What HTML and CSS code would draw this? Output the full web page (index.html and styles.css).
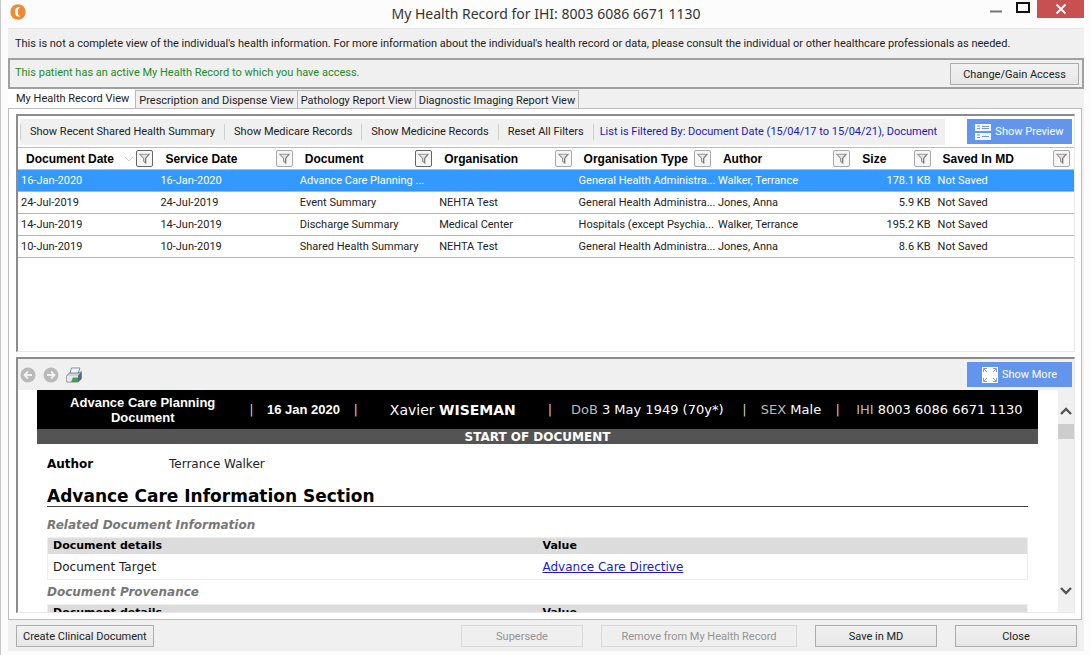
FILE: index.html
```
<!DOCTYPE html>
<html lang="en">
<head>
<meta charset="utf-8">
<title>My Health Record</title>
<link rel="stylesheet" href="styles.css">
</head>
<body>
<svg class="defs" aria-hidden="true">
  <symbol id="funnel" viewBox="0 0 16 16"><path d="M3 3.500h10L9.500 8v5L7 11V8z" fill="#e4e4e4" stroke="#999" stroke-width="1.200"/><path d="M12.500 3.500L9 8v5" fill="none" stroke="#777"/></symbol>
</svg>
<div class="window">
  <header class="titlebar">
    <svg class="logo" viewBox="0 0 16 16"><circle cx="8" cy="8" r="7.700" fill="#ee8a35"/><path d="M10.500 3.600C6 2.500 5 5.500 5 8s1.300 5.300 5.500 4.400C8.300 11.500 7.800 10 7.800 8s.5-3.500 2.700-4.400z" fill="#fff"/></svg>
    <h1>My Health Record for IHI: 8003 6086 6671 1130</h1>
    <div class="controls">
      <button class="ctl" aria-label="Minimise"><svg width="14" height="14" viewBox="0 0 14 14"><path d="M1 11.500h12" stroke="#777" stroke-width="2"/></svg></button>
      <button class="ctl" aria-label="Maximise"><svg width="14" height="14" viewBox="0 0 14 14"><path d="M1 3h12v9H1z" fill="none" stroke="#111" stroke-width="2"/></svg></button>
      <button class="ctl close" aria-label="Close window"><svg width="12" height="12" viewBox="0 0 12 12"><path d="M1.500 1.500l9 9M10.500 1.500l-9 9" stroke="#fff" stroke-width="1.800"/></svg></button>
    </div>
  </header>
  <main class="content">
    <p class="notice">This is not a complete view of the individual's health information. For more information about the individual's health record or data, please consult the individual or other healthcare professionals as needed.</p>
    <section class="access">
      <p>This patient has an active My Health Record to which you have access.</p>
      <button class="btn">Change/Gain Access</button>
    </section>
    <nav class="tabs" role="tablist">
      <button class="tab active" role="tab" aria-selected="true">My Health Record View</button>
      <button class="tab" role="tab">Prescription and Dispense View</button>
      <button class="tab" role="tab">Pathology Report View</button>
      <button class="tab" role="tab">Diagnostic Imaging Report View</button>
    </nav>
    <div class="pane">
      <section class="list">
        <div class="listbar">
          <div class="tools">
            <button>Show Recent Shared Health Summary</button>
            <button>Show Medicare Records</button>
            <button>Show Medicine Records</button>
            <button>Reset All Filters</button>
            <span class="filtered">List is Filtered By: Document Date (15/04/17 to 15/04/21), Document</span>
          </div>
          <button class="blue"><svg width="16" height="16" viewBox="0 0 16 16"><path d="M0 0h16v7H0zM0 9h16v7H0z" fill="#f4f7fd"/><path d="M2 2h3M2 4.500h3M2 11h3M2 13.500h3M7 2.500h7M7 12.500h7M7 4.500h7" stroke="#6f98dd"/></svg>Show Preview</button>
        </div>
        <table class="docs">
          <colgroup><col><col><col><col><col><col><col class="narrow"><col></colgroup>
          <thead>
            <tr>
              <th><div><span>Document Date</span><svg class="sort" viewBox="0 0 10 6"><path d="M1 1l4 4 4-4" fill="none" stroke="#ccc"/></svg><button class="filter on" aria-label="Filter document date"><svg><use href="#funnel"/></svg></button></div></th>
              <th><div><span>Service Date</span><button class="filter" aria-label="Filter service date"><svg><use href="#funnel"/></svg></button></div></th>
              <th><div><span>Document</span><button class="filter on" aria-label="Filter document"><svg><use href="#funnel"/></svg></button></div></th>
              <th><div><span>Organisation</span><button class="filter" aria-label="Filter organisation"><svg><use href="#funnel"/></svg></button></div></th>
              <th><div><span>Organisation Type</span><button class="filter" aria-label="Filter organisation type"><svg><use href="#funnel"/></svg></button></div></th>
              <th><div><span>Author</span><button class="filter" aria-label="Filter author"><svg><use href="#funnel"/></svg></button></div></th>
              <th><div><span>Size</span><button class="filter" aria-label="Filter size"><svg><use href="#funnel"/></svg></button></div></th>
              <th><div><span>Saved In MD</span><button class="filter" aria-label="Filter saved in MD"><svg><use href="#funnel"/></svg></button></div></th>
            </tr>
          </thead>
          <tbody>
            <tr class="selected"><td>16-Jan-2020</td><td>16-Jan-2020</td><td>Advance Care Planning ...</td><td></td><td>General Health Administra...</td><td>Walker, Terrance</td><td class="num">178.1 KB</td><td>Not Saved</td></tr>
            <tr><td>24-Jul-2019</td><td>24-Jul-2019</td><td>Event Summary</td><td>NEHTA Test</td><td>General Health Administra...</td><td>Jones, Anna</td><td class="num">5.9 KB</td><td>Not Saved</td></tr>
            <tr><td>14-Jun-2019</td><td>14-Jun-2019</td><td>Discharge Summary</td><td>Medical Center</td><td>Hospitals (except Psychia...</td><td>Walker, Terrance</td><td class="num">195.2 KB</td><td>Not Saved</td></tr>
            <tr><td>10-Jun-2019</td><td>10-Jun-2019</td><td>Shared Health Summary</td><td>NEHTA Test</td><td>General Health Administra...</td><td>Jones, Anna</td><td class="num">8.6 KB</td><td>Not Saved</td></tr>
          </tbody>
        </table>
      </section>
      <section class="preview">
        <div class="previewbar">
          <button class="icon" aria-label="Back"><svg viewBox="0 0 16 16"><circle cx="8" cy="8" r="7.500" fill="#b9b9b9"/><path d="M12 8H5M8 4.500L4.500 8 8 11.500" fill="none" stroke="#f2f2f2" stroke-width="1.800"/></svg></button>
          <button class="icon" aria-label="Forward"><svg viewBox="0 0 16 16"><circle cx="8" cy="8" r="7.500" fill="#b9b9b9"/><path d="M4 8h7M8 4.500L11.500 8 8 11.500" fill="none" stroke="#f2f2f2" stroke-width="1.800"/></svg></button>
          <button class="icon" aria-label="Print"><svg viewBox="0 0 16 16"><path d="M5.500 1H14l-2.500 7h-8z" fill="#f7faff" stroke="#7d8eac"/><path d="M.8 8.500L3.500 6H13l2.300-1.500V12L12 15H.8z" fill="#ccd3dc" stroke="#667180" stroke-width=".8"/><path d="M1 9h11v5.500H1z" fill="#e5eaed"/><path d="M7 10.500h5V15H5z" fill="#3ca052"/><path d="M12 8.500L15.300 5v7L12 15z" fill="#526879"/></svg></button>
          <button class="blue more"><svg width="16" height="16" viewBox="0 0 16 16"><path d="M0 0h16v16H0z" fill="#fff"/><path d="M1.500 5V1.500H5M11 1.500h3.500V5M14.500 11v3.500H11M5 14.500H1.500V11" fill="none" stroke="#8c9cba"/><path d="M2 2l3 3M14 2l-3 3M14 14l-3-3M2 14l3-3" stroke="#8695b2"/></svg>Show More</button>
        </div>
        <div class="viewer">
          <article class="document">
            <div class="banner">
              <strong class="arial">Advance Care Planning<br>Document</strong><i>|</i>
              <strong class="arial">16 Jan 2020</strong><i>|</i>
              <span class="name">Xavier <b>WISEMAN</b></span><i>|</i>
              <span><small>DoB</small> 3 May 1949 (70y*)</span><i>|</i>
              <span><small>SEX</small> Male</span><i>|</i>
              <span><small>IHI</small> 8003 6086 6671 1130</span>
            </div>
            <div class="start">START OF DOCUMENT</div>
            <div class="body">
              <dl><dt>Author</dt><dd>Terrance Walker</dd></dl>
              <h2>Advance Care Information Section</h2>
              <h3>Related Document Information</h3>
              <table class="details">
                <thead><tr><th>Document details</th><th>Value</th></tr></thead>
                <tbody><tr><td>Document Target</td><td><a href="#">Advance Care Directive</a></td></tr></tbody>
              </table>
              <h3>Document Provenance</h3>
              <table class="details">
                <thead><tr><th>Document details</th><th>Value</th></tr></thead>
              </table>
            </div>
          </article>
          <div class="scroll">
            <button aria-label="Scroll up"><svg viewBox="0 0 12 8"><path d="M1 7l5-5 5 5" fill="none" stroke="#555" stroke-width="2.400"/></svg></button>
            <div class="thumb"></div>
            <button class="down" aria-label="Scroll down"><svg viewBox="0 0 12 8"><path d="M1 1l5 5 5-5" fill="none" stroke="#555" stroke-width="2.400"/></svg></button>
          </div>
        </div>
      </section>
    </div>
    <footer class="footer">
      <button class="btn create">Create Clinical Document</button>
      <button class="btn std" disabled>Supersede</button>
      <button class="btn wide" disabled>Remove from My Health Record</button>
      <button class="btn std">Save in MD</button>
      <button class="btn std">Close</button>
    </footer>
  </main>
</div>
</body>
</html>
```
FILE: styles.css
```
* { box-sizing: border-box; }
body, h1, h2, h3, p, dl, dd { margin: 0; }
body {
  font: 11px/14px Roboto, "Liberation Sans", Arial, sans-serif;
  color: #222;
  background: #fcfcfc;
}
button { font: inherit; color: inherit; margin: 0; padding: 0; border: 0; background: none; white-space: nowrap; }
svg { display: block; }
.defs { position: absolute; width: 0; height: 0; }

.window {
  display: flex;
  flex-direction: column;
  height: 100vh;
  padding: 0 6px 4px 7px;
  border-left: 1px solid #c4c4c4;
}
.titlebar {
  display: grid;
  grid-template-columns: 1fr auto 1fr;
  height: 28px;
}
.logo { width: 16px; height: 16px; margin: 4px 2px; }
.titlebar h1 { font: 14px/28px "Noto Sans", "Open Sans", sans-serif; color: #333; }
.controls { display: flex; justify-content: flex-end; align-items: flex-start; }
.ctl { display: flex; justify-content: center; width: 27px; }
.close { align-items: center; width: 47px; height: 18px; margin-left: 1px; background: #c75050; }

.content { flex: 1; min-height: 0; display: flex; flex-direction: column; background: #f0f0f0; }
.notice { padding: 8px 7px 7px; border-top: 1px solid #e6e6e6; }
.access {
  display: flex;
  align-items: center;
  justify-content: space-between;
  height: 31px;
  padding: 0 3px 0 5px;
  border: 2px solid #a0a0a0;
  color: #1f8c1f;
}
.access p { padding-bottom: 1px; }
.access .btn { width: 129px; }
.btn {
  height: 22px;
  padding: 2px 6px 0;
  color: #222;
  border: 1px solid #acacac;
  background: linear-gradient(#f2f2f2, #e6e6e6);
}
.btn:disabled { color: #939393; border-color: #d9d9d9; background: #efefef; }

.tabs { display: flex; align-items: flex-end; height: 19px; }
.tab { height: 18px; padding: 2px 3px 0; border: 1px solid #b8b8b8; border-width: 1px 1px 0 0; }
.tab.active { height: 19px; padding: 0 6px 0 8px; background: #fff; border-top-color: #fff; }
.pane {
  flex: 1;
  min-height: 0;
  display: flex;
  flex-direction: column;
  gap: 5px;
  padding: 5px 6px 6px 7px;
  margin-right: 2px;
  border: 1px solid #bdbdbd;
  background: #fff;
}
.list, .preview { border: 1px solid #e8e8e8; border-top: 2px solid #8c8c8c; border-left: 2px solid #8c8c8c; }
.list { flex: 0 0 238px; overflow: hidden; }
.listbar { display: flex; align-items: center; justify-content: space-between; height: 31px; padding: 0 2px; }
.tools { display: flex; align-items: center; height: 26px; padding-right: 8px; background: #f0f0f0; }
.tools button { padding: 0 9px; line-height: 16px; border-left: 1px solid #d0d0d0; }
.filtered { padding-left: 6px; line-height: 16px; border-left: 1px solid #d0d0d0; color: #1a1aba; white-space: nowrap; }
.blue {
  display: flex;
  align-items: center;
  justify-content: center;
  gap: 4px;
  width: 105px;
  height: 25px;
  color: #fff;
  background: #6495ed;
}

.docs { width: 100%; table-layout: fixed; border-collapse: collapse; }
.docs col { width: 13.2%; }
.docs col.narrow { width: 7.6%; }
.docs th { height: 22px; padding: 0 4px 0 8px; border: 1px solid #bcbcbc; border-width: 1px 0; font: bold 12px/14px "Liberation Sans", Arial, sans-serif; text-align: left; color: #000; }
.docs th div { display: flex; align-items: center; }
.docs th span { flex: 1; white-space: nowrap; }
.sort { width: 10px; height: 6px; margin-right: 2px; }
.filter { width: 17px; height: 17px; border: 1px solid #a8a8a8; border-radius: 2px; background: #f7f7f7; }
.filter.on { border-color: #666; }
.filter svg { width: 15px; height: 15px; }
.docs td { height: 22px; padding: 1px 4px 0 3px; border-bottom: 1px solid #b5b5b5; white-space: nowrap; overflow: hidden; }
.docs .num { text-align: right; }
.selected { color: #fff; background: #3399ff; }

.preview { flex: 1; min-height: 0; display: flex; flex-direction: column; }
.previewbar { display: flex; align-items: center; gap: 7px; height: 31px; padding: 0 2px; background: #f0f0f0; }
.icon { width: 16px; height: 16px; }
.more { margin-left: auto; }
.viewer { flex: 1; min-height: 0; display: flex; }
.document { flex: 1; min-width: 0; overflow: hidden; padding: 0 20px 0 19px; font: 12px/16px "DejaVu Sans", Verdana, sans-serif; }
.banner {
  display: grid;
  grid-template-columns: 211fr 6px 98fr 6px 188fr 6px 188fr 6px 87fr 6px 197fr;
  align-items: center;
  height: 39px;
  font-size: 13px;
  color: #fff;
  background: #000;
  text-align: center;
  white-space: nowrap;
}
.banner > * { min-width: 0; }
.banner i { font-style: normal; color: #ccc; }
.banner small { font-size: 13px; color: #bbb; }
.banner .arial { font: bold 13px/15px "Liberation Sans", Arial, sans-serif; }
.banner .name { font-size: 14px; }
.start { height: 15px; font-weight: bold; line-height: 16px; text-align: center; color: #fff; background: #545454; }
.body { padding: 12px 10px 0; }
.body dl { display: flex; margin-bottom: 14px; }
.body dt { width: 122px; font-weight: bold; color: #000; }
.body h2 { font-size: 17px; line-height: 20px; border-bottom: 1px solid #444; color: #000; margin-bottom: 10px; }
.body h3 { font-size: 12px; line-height: 16px; font-style: italic; color: #777; }
.details { width: 100%; table-layout: fixed; border-collapse: collapse; border: 1px solid #eee; margin: 4px 0; }
.details th { height: 16px; padding: 0 5px; font-size: 11px; line-height: 16px; text-align: left; color: #000; background: #dcdcdc; }
.details td { height: 25px; padding: 1px 5px 0; }
.details a { color: #1a1ac8; }
.scroll { display: flex; flex-direction: column; width: 16px; background: #f0f0f0; }
.scroll button { height: 34px; padding: 0 2px; }
.scroll button.down { margin-top: auto; height: 42px; }
.scroll svg { width: 12px; height: 8px; margin-top: 8px; }
.scroll .down svg { margin: 0; }
.thumb { height: 15px; background: #cdcdcd; }

.footer { display: flex; justify-content: flex-end; gap: 18px; padding: 5px 7px 4px 8px; }
.create { margin-right: auto; }
.std { width: 122px; }
.wide { width: 196px; }
```
